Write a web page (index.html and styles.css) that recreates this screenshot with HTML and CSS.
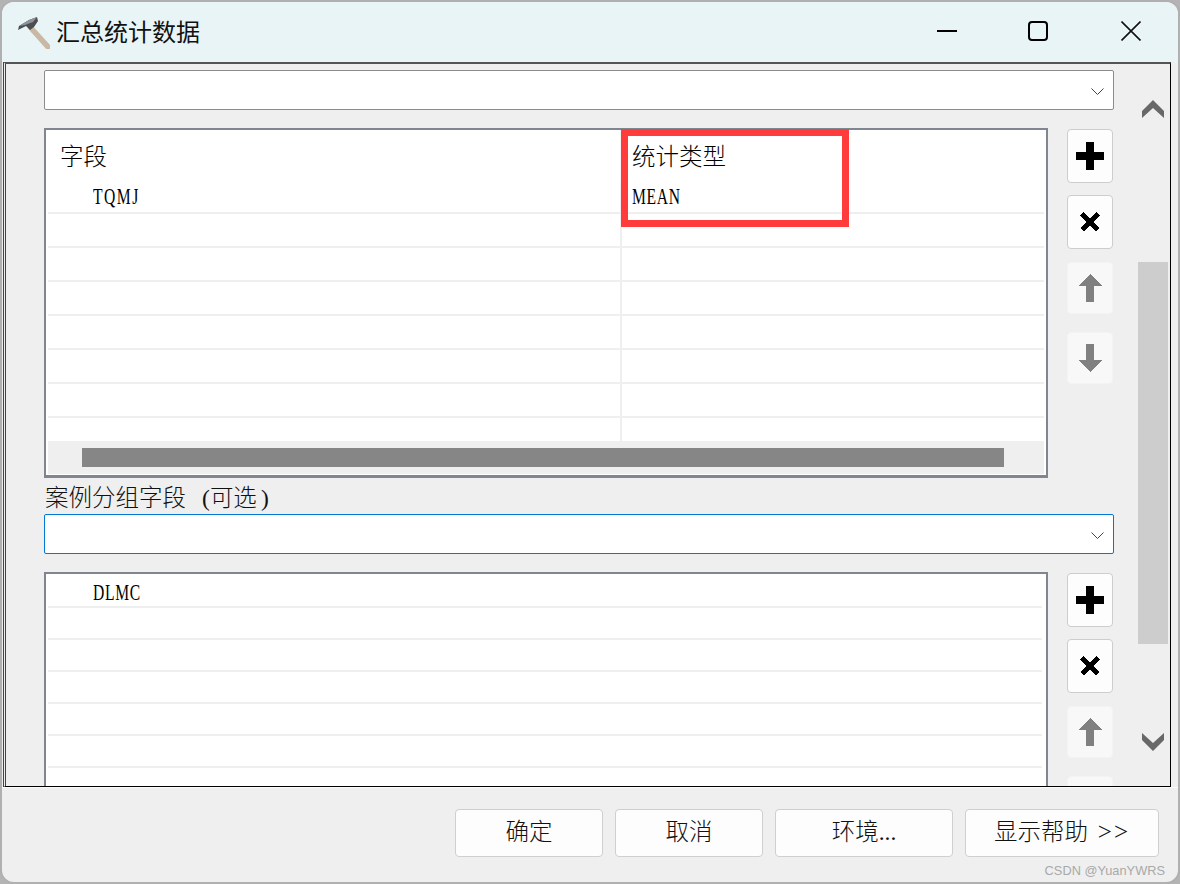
FILE: index.html
```html
<!DOCTYPE html>
<html lang="zh-CN">
<head>
    <meta charset="UTF-8">
    <meta name="viewport" content="width=device-width, initial-scale=1.0">
    <title>汇总统计数据</title>
    <link rel="stylesheet" href="styles.css">
</head>
<body>
    <svg class="sprites" width="0" height="0">
        <symbol id="icon-plus" viewBox="0 0 28 28"><path d="M10 0h8v10h10v8H18v10h-8V18H0v-8h10z"/></symbol>
        <symbol id="icon-cross" viewBox="0 0 20 20"><path d="M2 2L18 18M18 2L2 18" stroke="#000" stroke-width="4.5" fill="none" shape-rendering="crispEdges"/></symbol>
        <symbol id="icon-up" viewBox="0 0 24 28"><path d="M12 0L24 12H16V28H8V12H0z" shape-rendering="crispEdges"/></symbol>
        <symbol id="icon-down" viewBox="0 0 24 28"><path d="M8 0H16V16H24L12 28L0 16H8z" shape-rendering="crispEdges"/></symbol>
        <symbol id="icon-chevron" viewBox="0 0 13 7"><path d="M0.5 0.5L6.5 6.5L12.5 0.5" fill="none" stroke="#444" stroke-width="1"/></symbol>
    </svg>

    <div class="window">
        <div class="titlebar">
            <svg class="app-icon" viewBox="0 0 32 32">
                <path d="M13 11L30 30" stroke="#c9b9a4" stroke-width="5.5" stroke-linecap="round"/>
                <path d="M0 13L1 9L11 3L19 0L20 4L16 10L12 13L8 9z" fill="#4b4e51"/>
                <path d="M1 9L11 3L19 0L15 5L7 8z" fill="#8f9397"/>
            </svg>
            <span class="title-text">汇总统计数据</span>
            <div class="win-controls">
                <svg class="win-icon" viewBox="0 0 20 20"><path d="M0 10H20" stroke="#000" stroke-width="2"/></svg>
                <svg class="win-icon" viewBox="0 0 20 20"><rect x="1" y="1" width="18" height="18" rx="3" fill="none" stroke="#000" stroke-width="2"/></svg>
                <svg class="win-icon win-close" viewBox="0 0 20 20"><path d="M0.5 0.5L19.5 19.5M19.5 0.5L0.5 19.5" stroke="#111" stroke-width="1.6"/></svg>
            </div>
        </div>

        <div class="main">
            <div class="form">
                <div class="combo">
                    <svg class="chevron"><use href="#icon-chevron"/></svg>
                </div>

                <div class="section">
                    <div class="table">
                        <div class="row row-head">
                            <div class="cell cell-field">字段</div>
                            <div class="cell cell-type">统计类型</div>
                        </div>
                        <div class="row">
                            <div class="cell cell-field cell-indent"><span class="latin latin-wide">TQMJ</span></div>
                            <div class="cell cell-type"><span class="latin">MEAN</span></div>
                        </div>
                        <div class="row"><div class="cell cell-field"></div><div class="cell cell-type"></div></div>
                        <div class="row"><div class="cell cell-field"></div><div class="cell cell-type"></div></div>
                        <div class="row"><div class="cell cell-field"></div><div class="cell cell-type"></div></div>
                        <div class="row"><div class="cell cell-field"></div><div class="cell cell-type"></div></div>
                        <div class="row"><div class="cell cell-field"></div><div class="cell cell-type"></div></div>
                        <div class="row"><div class="cell cell-field"></div><div class="cell cell-type"></div></div>
                        <div class="row row-stub"><div class="cell cell-field"></div><div class="cell cell-type"></div></div>
                        <div class="hscroll"><div class="hscroll-thumb"></div></div>
                        <div class="highlight"></div>
                    </div>
                    <div class="tools">
                        <div class="tool"><svg class="icon-plus"><use href="#icon-plus"/></svg></div>
                        <div class="tool"><svg class="icon-cross"><use href="#icon-cross"/></svg></div>
                        <div class="tool tool-off tool-up"><svg class="icon-arrow"><use href="#icon-up"/></svg></div>
                        <div class="tool tool-off tool-down"><svg class="icon-arrow"><use href="#icon-down"/></svg></div>
                    </div>
                </div>

                <div class="field-label">案例分组字段 <span class="half half-open">(</span>可选<span class="half half-close">)</span></div>
                <div class="combo combo-focus">
                    <svg class="chevron"><use href="#icon-chevron"/></svg>
                </div>

                <div class="section">
                    <div class="table table-group">
                        <div class="row row-slim row-first"><div class="cell cell-indent"><span class="latin">DLMC</span></div></div>
                        <div class="row row-slim"></div>
                        <div class="row row-slim"></div>
                        <div class="row row-slim"></div>
                        <div class="row row-slim"></div>
                        <div class="row row-slim"></div>
                        <div class="row row-slim"></div>
                    </div>
                    <div class="tools">
                        <div class="tool"><svg class="icon-plus"><use href="#icon-plus"/></svg></div>
                        <div class="tool"><svg class="icon-cross"><use href="#icon-cross"/></svg></div>
                        <div class="tool tool-off tool-up"><svg class="icon-arrow"><use href="#icon-up"/></svg></div>
                        <div class="tool tool-off tool-down"><svg class="icon-arrow"><use href="#icon-down"/></svg></div>
                    </div>
                </div>
            </div>

            <div class="vscroll">
                <svg class="vscroll-arrow" viewBox="0 0 22 18"><path d="M11 0L22 11V18L11 8L0 18V11z"/></svg>
                <div class="vscroll-thumb"></div>
                <svg class="vscroll-arrow vscroll-arrow-down" viewBox="0 0 22 18"><path d="M0 0L11 10L22 0V7L11 18L0 7z"/></svg>
            </div>
        </div>

        <div class="footer">
            <div class="btn"><span class="btn-text">确定</span></div>
            <div class="btn"><span class="btn-text">取消</span></div>
            <div class="btn btn-env"><span class="btn-text">环境...</span></div>
            <div class="btn btn-help"><span class="btn-text">显示帮助 <span class="arrows">&gt;&gt;</span></span></div>
        </div>
        <div class="watermark">CSDN @YuanYWRS</div>
    </div>
</body>
</html>
```

FILE: styles.css
```css
* {
    box-sizing: border-box;
}
body {
    margin: 0;
    width: 1180px;
    height: 884px;
    overflow: hidden;
    background-color: #b4b4b4;
    font-family: "Liberation Serif", "Noto Sans CJK SC", serif;
    font-size: 23.5px;
    font-weight: 300;
    color: #000;
}
.sprites {
    position: absolute;
}
.window {
    position: relative;
    display: flex;
    flex-direction: column;
    width: 1180px;
    height: 884px;
    border: 2px solid #b0b0b0;
    border-radius: 14px;
    background-color: #efefef;
    overflow: hidden;
}

/* title bar */
.titlebar {
    display: flex;
    align-items: center;
    flex: none;
    height: 60px;
    padding: 0 37px 0 16px;
    background-color: #e9f4f7;
}
.app-icon {
    width: 32px;
    height: 32px;
    margin-right: 6px;
    margin-top: 2px;
}
.title-text {
    margin-top: -4px;
    font-family: "Noto Sans CJK SC", sans-serif;
    font-size: 24px;
    font-weight: 400;
    color: #111;
}
.win-controls {
    display: flex;
    gap: 71px;
    margin-left: auto;
    margin-top: -2px;
}
.win-icon {
    width: 20px;
    height: 20px;
}
.win-close {
    margin-left: 2px;
}

/* scrolled area */
.main {
    display: flex;
    flex: none;
    height: 725px;
    margin: 0 7px 0 1px;
    border-top: 2px solid #555;
    border-left: 3px double #444;
    border-right: 1px solid #000;
    border-bottom: 1px solid #000;
    overflow: hidden;
}
.form {
    flex: none;
    width: 1108px;
    padding: 6px 0 0 38px;
}
.combo {
    display: flex;
    align-items: center;
    justify-content: flex-end;
    width: 1070px;
    height: 40px;
    padding-right: 9px;
    background-color: #fff;
    border: 1px solid #8c8c8c;
    border-radius: 2px;
}
.combo-focus {
    border-color: #0078d4;
}
.chevron {
    width: 13px;
    height: 7px;
    margin-top: 2px;
}
.section {
    display: flex;
    align-items: flex-start;
    gap: 19px;
    margin-top: 18px;
}
.field-label {
    height: 36px;
    padding: 6px 0 0 1px;
    line-height: 28px;
    word-spacing: 6px;
    color: #111;
}
.half {
    display: inline-block;
    width: 12px;
}
.half-open {
    text-align: right;
}
.half-close {
    padding-left: 4px;
}

/* tables */
.table {
    position: relative;
    flex: none;
    width: 1004px;
    padding: 0 2px;
    background-color: #fff;
    border: 2px solid #808690;
    border-bottom-width: 3px;
}
.row {
    display: flex;
    width: 996px;
    height: 34px;
    border-bottom: 2px solid #efefef;
}
.row-head {
    height: 50px;
    border-bottom: none;
}
.row-head .cell {
    padding-top: 12px;
}
.row-stub {
    height: 23px;
    border-bottom: none;
}
.cell {
    line-height: 30px;
    white-space: nowrap;
}
.cell-field {
    flex: none;
    width: 574px;
    padding-left: 12px;
    border-right: 2px solid #efefef;
}
.cell-type {
    flex: 1;
    padding-left: 10px;
}
.row-head .cell-field {
    border-right-color: #f4f4f4;
}
.cell-indent {
    padding-left: 45px;
}
.latin {
    display: inline-block;
    margin-top: 2px;
    font-size: 23px;
    letter-spacing: 1px;
    transform: scaleX(0.68);
    transform-origin: left center;
}
.latin-wide {
    letter-spacing: 2.2px;
}
.hscroll {
    height: 34px;
    width: 996px;
    padding: 7px 0 0 34px;
    background-color: #efefef;
    border-bottom: 1px solid #fff;
}
.hscroll-thumb {
    width: 922px;
    height: 19px;
    background-color: #868686;
}
.highlight {
    position: absolute;
    left: 575px;
    top: -1px;
    width: 228px;
    height: 98px;
    border: 7px solid #ff3b3b;
}
.table-group .row {
    width: 994px;
}
.table-group {
    height: 260px;
}
.row-slim {
    height: 32px;
}
.row-first {
    height: 34px;
    padding-top: 2px;
}

/* buttons beside the tables */
.tools {
    display: flex;
    flex-direction: column;
    gap: 12px;
    flex: none;
    padding-top: 1px;
}
.tool {
    display: flex;
    align-items: center;
    justify-content: center;
    width: 46px;
    height: 54px;
    background-color: #fdfdfd;
    border: 1px solid #cdcdcd;
    border-radius: 4px;
}
.tool-off {
    height: 52px;
    background-color: #f8f8f8;
    border-color: #f3f3f3;
    fill: #808080;
}
.tool-up {
    margin-top: 1px;
}
.tool-down {
    margin-top: 6px;
}
.icon-plus {
    width: 28px;
    height: 28px;
}
.icon-cross {
    width: 20px;
    height: 20px;
}
.icon-arrow {
    width: 24px;
    height: 28px;
}

/* vertical scrollbar */
.vscroll {
    display: flex;
    flex-direction: column;
    flex: none;
    width: 30px;
    margin-left: 24px;
    padding-top: 36px;
    align-items: center;
}
.vscroll-arrow {
    flex: none;
    width: 22px;
    height: 18px;
    fill: #686868;
}
.vscroll-thumb {
    flex: none;
    width: 30px;
    height: 382px;
    margin-top: 144px;
    background-color: #cdcdcd;
}
.vscroll-arrow-down {
    margin-top: 89px;
}

/* footer */
.footer {
    display: flex;
    justify-content: flex-end;
    gap: 12px;
    flex: 1;
    padding: 21px 19px 0 0;
    border-top: 1px solid #fafafa;
}
.btn {
    display: flex;
    align-items: center;
    justify-content: center;
    width: 148px;
    height: 48px;
    background-color: #fdfdfd;
    border: 1px solid #cfcfcf;
    border-radius: 4px;
    color: #111;
}
.btn-text {
    margin-top: -7px;
    word-spacing: 4px;
}
.arrows {
    letter-spacing: 2px;
    font-size: 25px;
}
.btn-env {
    width: 178px;
}
.btn-help {
    width: 194px;
}
.watermark {
    position: absolute;
    right: 13px;
    bottom: 4px;
    font-family: "Liberation Sans", sans-serif;
    font-size: 12.8px;
    font-weight: 400;
    color: #a9a9a9;
}
```
